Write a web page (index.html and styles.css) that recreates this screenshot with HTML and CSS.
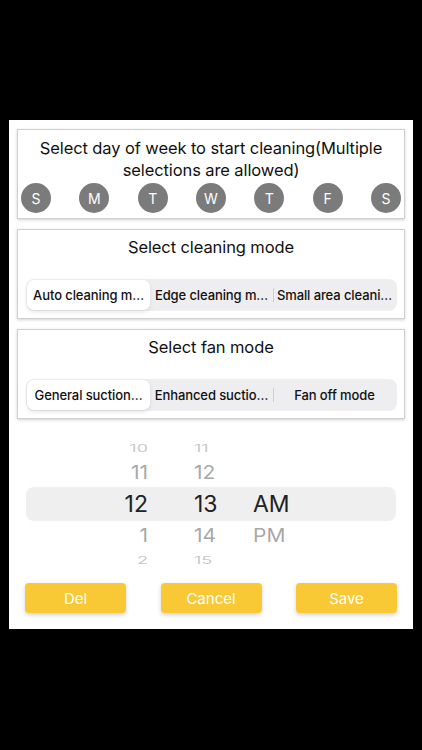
FILE: index.html
```html
<!DOCTYPE html>
<html lang="en">
<head>
<meta charset="utf-8">
<title>Timer</title>
<link rel="stylesheet" href="styles.css">
</head>
<body>
<div class="panel">
  <section class="card card-days">
    <h2 class="card-title">Select day of week to start cleaning(Multiple selections are allowed)</h2>
    <div class="days">
      <span class="day">S</span>
      <span class="day">M</span>
      <span class="day">T</span>
      <span class="day">W</span>
      <span class="day">T</span>
      <span class="day">F</span>
      <span class="day">S</span>
    </div>
  </section>
  <section class="card">
    <h2 class="card-title">Select cleaning mode</h2>
    <div class="segmented">
      <span class="seg seg-active">Auto cleaning m…</span>
      <span class="seg">Edge cleaning m…</span>
      <span class="seg seg-divided">Small area cleani…</span>
    </div>
  </section>
  <section class="card">
    <h2 class="card-title">Select fan mode</h2>
    <div class="segmented">
      <span class="seg seg-active">General suction…</span>
      <span class="seg">Enhanced suctio…</span>
      <span class="seg seg-divided">Fan off mode</span>
    </div>
  </section>
  <div class="picker">
    <div class="prow prow-far"><span class="ph">10</span><span class="pm">11</span></div>
    <div class="prow prow-near"><span class="ph">11</span><span class="pm">12</span></div>
    <div class="prow prow-sel"><span class="ph">12</span><span class="pm">13</span><span class="pa">AM</span></div>
    <div class="prow prow-near"><span class="ph">1</span><span class="pm">14</span><span class="pa">PM</span></div>
    <div class="prow prow-far"><span class="ph">2</span><span class="pm">15</span></div>
  </div>
  <div class="actions">
    <button class="btn">Del</button>
    <button class="btn">Cancel</button>
    <button class="btn">Save</button>
  </div>
</div>
</body>
</html>
```
FILE: styles.css
```css
html, body {
  margin: 0;
  padding: 0;
  background: #000;
}
body {
  width: 422px;
  height: 750px;
  font-family: "Inter", "Liberation Sans", sans-serif;
  color: #111;
}
.panel {
  margin: 120px 0 0 9px;
  width: 404px;
  background: #fff;
  padding: 9px 8px 16px;
  box-sizing: border-box;
  display: flex;
  flex-direction: column;
}
.card {
  border: 1px solid #cfcfcf;
  box-shadow: 0 1px 3px rgba(0,0,0,0.18);
  height: 90px;
  box-sizing: border-box;
  margin-bottom: 10px;
  display: flex;
  flex-direction: column;
  align-items: stretch;
}
.card-title {
  margin: 0;
  font-size: 16.5px;
  font-weight: 400;
  line-height: 22px;
  text-align: center;
  padding-top: 6px;
  letter-spacing: -0.1px;
}
.card-days .card-title {
  padding: 7px 12px 0;
}
.days {
  display: flex;
  justify-content: space-between;
  padding: 2px 3px 0;
}
.day {
  width: 30px;
  height: 30px;
  border-radius: 50%;
  background: #7b7b7b;
  color: #fff;
  font-size: 14px;
  display: flex;
  align-items: center;
  justify-content: center;
}
.segmented {
  margin: 21px 7px 0 8px;
  height: 32px;
  background: #eeeef0;
  border-radius: 8px;
  display: grid;
  grid-template-columns: 1fr 1fr 1fr;
  padding: 1px;
  box-sizing: border-box;
}
.seg {
  font-size: 13px;
  font-weight: 500;
  color: #111;
  display: flex;
  align-items: center;
  justify-content: center;
  white-space: nowrap;
  overflow: hidden;
  position: relative;
  letter-spacing: -0.1px;
}
.seg-active {
  background: #fff;
  border-radius: 7px;
  box-shadow: 0 2px 4px rgba(0,0,0,0.10);
}
.seg-divided::before {
  content: "";
  position: absolute;
  left: 0;
  top: 8px;
  bottom: 8px;
  width: 1px;
  background: #cfcfd3;
}
.picker {
  margin: 9px 9px 0;
  display: flex;
  flex-direction: column;
}
.prow {
  display: grid;
  grid-template-columns: 122px 46px 59px 1fr;
  align-items: center;
}
.ph { grid-column: 1; text-align: right; }
.pm { grid-column: 3; text-align: left; }
.pa { grid-column: 4; text-align: left; }
.prow-far {
  height: 20px;
  font-size: 18px;
  color: #c9c9cc;
}
.prow-far span { display: block; transform: scaleY(0.55); }
.prow-near {
  height: 29px;
  font-size: 21px;
  color: #a8a8ab;
}
.prow-near span { display: block; transform: scaleY(0.9); }
.prow-sel {
  height: 34px;
  font-size: 23px;
  color: #222;
  background: #efeff0;
  border-radius: 8px;
}
.actions {
  margin-top: 13px;
  padding: 0 8px;
  display: flex;
  justify-content: space-between;
}
.btn {
  width: 101px;
  height: 30px;
  border: none;
  border-radius: 4px;
  background: #f9c935;
  color: #fff;
  font-family: inherit;
  font-size: 15px;
  box-shadow: 0 2px 4px rgba(0,0,0,0.18);
  padding: 0;
}
```
